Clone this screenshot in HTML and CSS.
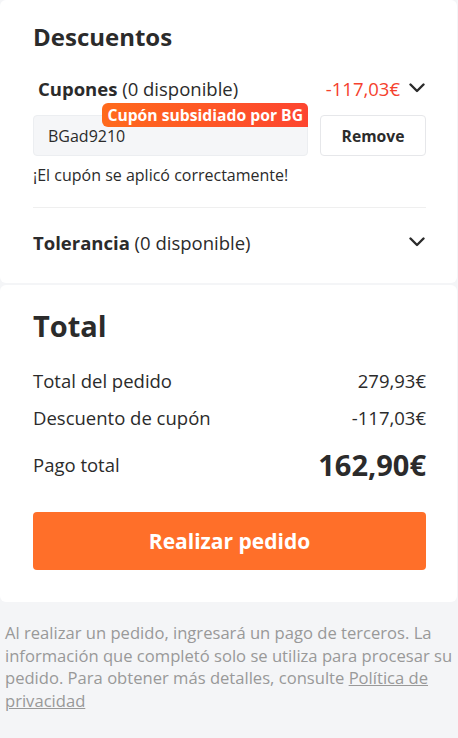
FILE: index.html
```html
<!DOCTYPE html>
<html lang="es">
<head>
    <meta charset="UTF-8">
    <meta name="viewport" content="width=device-width, initial-scale=1.0">
    <title>Descuentos</title>
    <link rel="stylesheet" href="styles.css">
</head>
<body>
    <section class="card discounts">
        <h2 class="card-title">Descuentos</h2>

        <div class="row coupon-head">
            <div class="label"><b>Cupones</b> (0 disponible)</div>
            <div class="row-right">
                <span class="amount-red">-117,03€</span>
                <svg class="chevron" width="16" height="10" viewBox="0 0 16 10"><path d="M1.5 1.5 8 8l6.5-6.5" fill="none" stroke="#2b2b2b" stroke-width="2.4" stroke-linecap="round" stroke-linejoin="round"/></svg>
            </div>
        </div>

        <div class="coupon-line">
            <div class="coupon-input">
                <span class="badge">Cupón subsidiado por BG</span>
                <input type="text" value="BGad9210" readonly>
            </div>
            <button class="remove-btn">Remove</button>
        </div>
        <p class="success">¡El cupón se aplicó correctamente!</p>

        <div class="divider"></div>

        <div class="row tolerance">
            <div class="label"><b>Tolerancia</b> (0 disponible)</div>
            <svg class="chevron" width="16" height="10" viewBox="0 0 16 10"><path d="M1.5 1.5 8 8l6.5-6.5" fill="none" stroke="#2b2b2b" stroke-width="2.4" stroke-linecap="round" stroke-linejoin="round"/></svg>
        </div>
    </section>

    <section class="card totals">
        <h2 class="card-title big">Total</h2>
        <div class="sum-row">
            <span>Total del pedido</span>
            <span>279,93€</span>
        </div>
        <div class="sum-row second">
            <span>Descuento de cupón</span>
            <span>-117,03€</span>
        </div>
        <div class="sum-row pay">
            <span>Pago total</span>
            <span class="pay-amount">162,90€</span>
        </div>
        <button class="order-btn">Realizar pedido</button>
    </section>

    <p class="notice">Al realizar un pedido, ingresará un pago de terceros. La información que completó solo se utiliza para procesar su pedido. Para obtener más detalles, consulte <a href="#">Política de privacidad</a></p>
</body>
</html>
```

FILE: styles.css
```css
body {
    margin: 0;
    background-color: #f4f5f7;
    font-family: "Open Sans", Arial, sans-serif;
    color: #2b2b2b;
}
.card {
    background-color: #fff;
    border-radius: 6px;
    margin-right: 1px;
    padding: 0 31px 0 33px;
}
.discounts {
    padding-top: 20px;
    padding-bottom: 29px;
}
.totals {
    margin-top: 2px;
    padding-top: 21px;
    padding-bottom: 32px;
}
.card-title {
    margin: 0;
    font-size: 24px;
    font-weight: 700;
    line-height: 34px;
}
.card-title.big {
    font-size: 29px;
    line-height: 40px;
}
.row {
    display: flex;
    align-items: center;
    justify-content: space-between;
}
.label {
    font-size: 18.5px;
}
.label b {
    font-weight: 700;
}
.coupon-head {
    margin-top: 22px;
    padding-left: 5px;
    height: 24px;
}
.row-right {
    display: flex;
    align-items: center;
    gap: 9px;
}
.amount-red {
    color: #f5412d;
    font-size: 18.5px;
}
.chevron {
    display: block;
    margin-right: 1px;
}
.coupon-line {
    display: flex;
    gap: 12px;
    margin-top: 15px;
}
.coupon-input {
    position: relative;
    flex: 1;
}
.coupon-input input {
    box-sizing: border-box;
    width: 100%;
    height: 41px;
    padding: 0 14px;
    border: 1px solid #eceef1;
    border-radius: 4px;
    background-color: #f5f6f8;
    font-family: inherit;
    font-size: 16px;
    color: #2b2b2b;
    outline: none;
}
.badge {
    position: absolute;
    right: 0;
    top: -12px;
    padding: 0 5px;
    height: 24px;
    line-height: 24px;
    border-radius: 6px 5px 0 6px;
    background: linear-gradient(90deg, #ff6a1c, #fd4530);
    color: #fff;
    font-size: 15.7px;
    font-weight: 700;
    white-space: nowrap;
}
.remove-btn {
    width: 106px;
    height: 41px;
    border: 1px solid #e6e7ea;
    border-radius: 4px;
    background-color: #fff;
    font-family: inherit;
    font-size: 15.7px;
    font-weight: 700;
    color: #2b2b2b;
}
.success {
    margin: 8px 0 0;
    font-size: 16px;
    line-height: 22px;
}
.divider {
    height: 1px;
    background-color: #efefef;
    margin-top: 21px;
}
.tolerance {
    margin-top: 22px;
    height: 24px;
}
.sum-row {
    display: flex;
    justify-content: space-between;
    align-items: center;
    font-size: 18.5px;
    line-height: 26px;
    margin-top: 22px;
}
.sum-row.second {
    margin-top: 11px;
}
.sum-row.pay {
    margin-top: 16px;
    line-height: 36px;
}
.pay-amount {
    font-size: 29px;
    font-weight: 700;
}
.order-btn {
    display: block;
    width: 100%;
    height: 58px;
    margin-top: 29px;
    border: none;
    border-radius: 4px;
    background-color: #ff6f29;
    color: #fff;
    font-family: inherit;
    font-size: 21px;
    font-weight: 700;
}
.notice {
    margin: 0;
    padding: 20px 2px 40px 5px;
    font-size: 16.6px;
    line-height: 22.5px;
    color: #999;
}
.notice a {
    color: #999;
    text-decoration: underline;
}
```
